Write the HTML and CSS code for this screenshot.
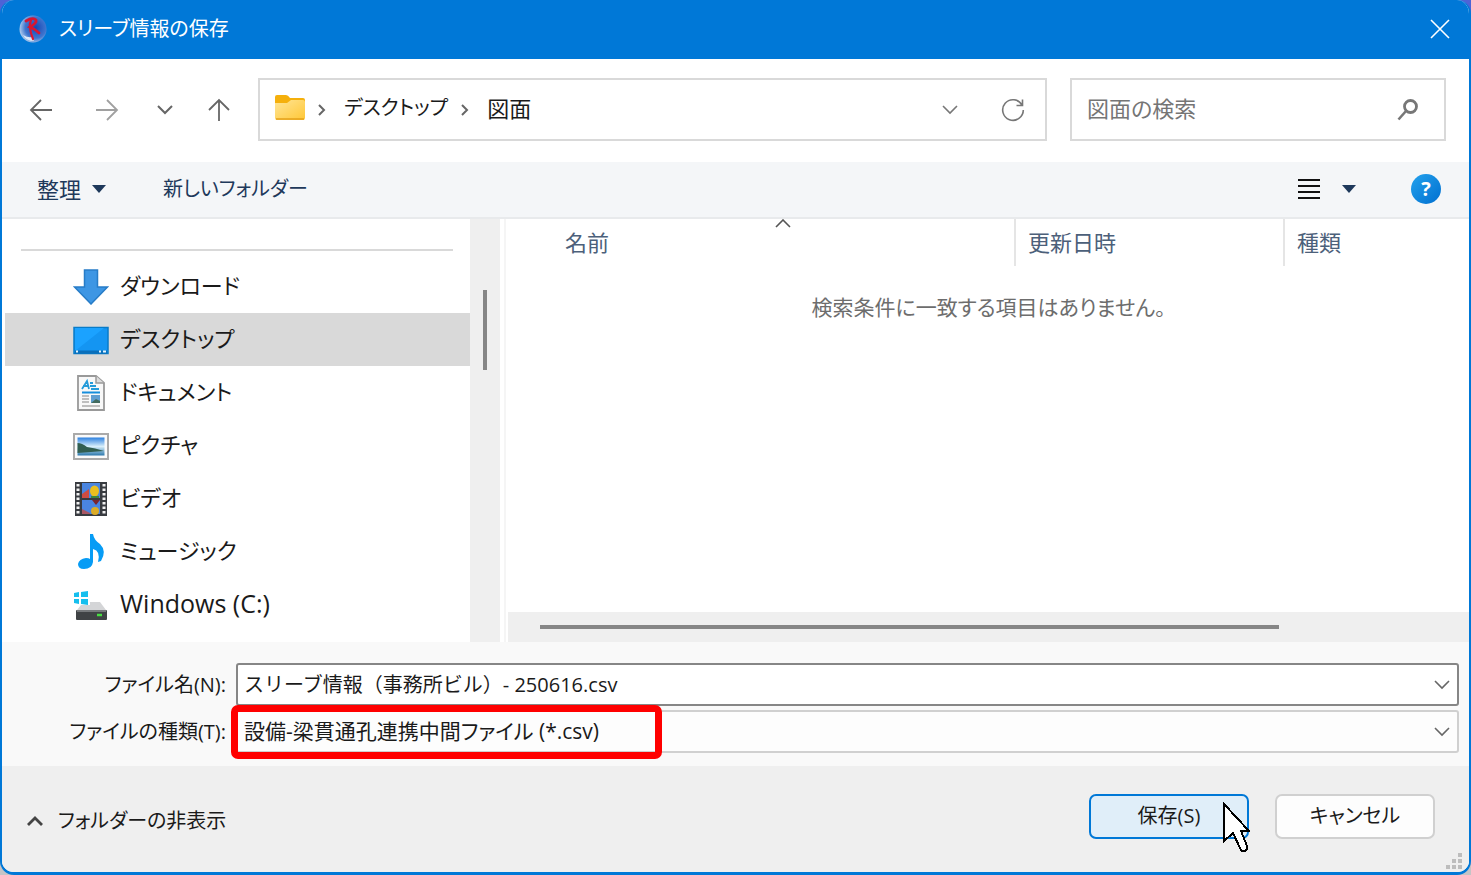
FILE: index.html
```html
<!DOCTYPE html>
<html lang="ja">
<head>
<meta charset="utf-8">
<meta name="viewport" content="width=device-width, initial-scale=1">
<title>スリーブ情報の保存</title>
<link rel="stylesheet" href="styles.css">
</head>
<body>
<div class="dialog" role="dialog" aria-labelledby="dialog-title">
  <header class="titlebar">
    <svg class="app-icon" width="28" height="28" viewBox="0 0 28 28" aria-hidden="true">
      <defs><radialGradient id="globe" cx=".6" cy=".45" r=".65"><stop offset="0" stop-color="#1647b4"/><stop offset=".6" stop-color="#3f76cf"/><stop offset="1" stop-color="#c4dbf2"/></radialGradient></defs>
      <circle cx="14" cy="14" r="13.500" fill="url(#globe)"/>
      <path d="M4 20Q9 23 13 22L15 26Q7 26 4 20Z" fill="#dce9f7"/>
      <path d="M7 6Q14 2 17 5Q18 8 11 12Q16 14 20 18" fill="none" stroke="#d71632" stroke-width="2.800" stroke-linecap="round"/>
      <path d="M12 5Q9 12 14 24" fill="none" stroke="#d71632" stroke-width="2.200" stroke-linecap="round"/>
    </svg>
    <h1 class="title" id="dialog-title">スリーブ情報の保存</h1>
    <button class="icon-button close" type="button" aria-label="閉じる">
      <svg width="20" height="20" viewBox="0 0 20 20"><path d="M1 1L19 19M19 1L1 19" fill="none" stroke="#fff" stroke-width="1.600"/></svg>
    </button>
  </header>

  <nav class="navbar" aria-label="ナビゲーション">
    <div class="nav-buttons">
      <button class="icon-button" type="button" aria-label="戻る"><svg width="24" height="24" viewBox="0 0 24 24"><path d="M23 12H2M12 2L2 12L12 22" fill="none" stroke="#666" stroke-width="1.800"/></svg></button>
      <button class="icon-button" type="button" aria-label="進む"><svg width="24" height="24" viewBox="0 0 24 24"><path d="M1 12H22M12 2L22 12L12 22" fill="none" stroke="#a0a0a0" stroke-width="1.800"/></svg></button>
      <button class="icon-button" type="button" aria-label="最近表示した場所"><svg width="16" height="10" viewBox="0 0 16 10"><path d="M1 1L8 8L15 1" fill="none" stroke="#666" stroke-width="2"/></svg></button>
      <button class="icon-button" type="button" aria-label="上へ"><svg width="24" height="24" viewBox="0 0 24 24"><path d="M12 23V2M2 12L12 2L22 12" fill="none" stroke="#666" stroke-width="1.800"/></svg></button>
    </div>
    <div class="address">
      <svg class="folder" width="30" height="26" viewBox="0 0 30 26" aria-hidden="true">
        <defs><linearGradient id="fold" x1="0" y1="0" x2="1" y2="1"><stop offset="0" stop-color="#ffe596"/><stop offset="1" stop-color="#ffc736"/></linearGradient></defs>
        <path d="M0 2Q0 0 2 0H11Q13 0 15 3H28Q30 3 30 5V12H0Z" fill="#f5b00c"/>
        <path d="M0 8H12L16 5H28Q30 5 30 7V23Q30 25 28 25H2Q0 25 0 23Z" fill="url(#fold)"/>
        <path d="M1 24H29" stroke="#e4a11a" stroke-width="1.500"/>
      </svg>
      <svg class="crumb-arrow" width="8" height="12" viewBox="0 0 8 12" aria-hidden="true"><path d="M1 1L6 6L1 11" fill="none" stroke="#666" stroke-width="2"/></svg>
      <a class="crumb" href="#desktop">デスクトップ</a>
      <svg class="crumb-arrow" width="8" height="12" viewBox="0 0 8 12" aria-hidden="true"><path d="M1 1L6 6L1 11" fill="none" stroke="#666" stroke-width="2"/></svg>
      <a class="crumb" href="#drawings">図面</a>
      <button class="icon-button history" type="button" aria-label="以前の場所"><svg width="16" height="10" viewBox="0 0 16 10"><path d="M1 1L8 8L15 1" fill="none" stroke="#777" stroke-width="1.600"/></svg></button>
      <button class="icon-button" type="button" aria-label="最新の情報に更新"><svg width="24" height="24" viewBox="0 0 24 24"><path d="M21 7A10.300 10.300 0 1 0 22.300 12M21.500 1.500V7.500H15.500" fill="none" stroke="#777" stroke-width="1.600"/></svg></button>
    </div>
    <div class="search">
      <input class="search-input" type="text" placeholder="図面の検索" aria-label="図面の検索">
      <button class="icon-button" type="button" aria-label="検索"><svg width="22" height="24" viewBox="0 0 22 24"><circle cx="13.500" cy="8.500" r="6" fill="none" stroke="#777" stroke-width="2.800"/><path d="M9 13L1.500 21.500" stroke="#777" stroke-width="2.600"/></svg></button>
    </div>
  </nav>

  <div class="toolbar">
    <button class="tool organize" type="button">整理<svg width="14" height="8" viewBox="0 0 14 8" aria-hidden="true"><path d="M0 0H14L7 8Z" fill="#1e395b"/></svg></button>
    <button class="tool" type="button">新しいフォルダー</button>
    <div class="tool-end">
      <button class="tool view" type="button" aria-label="表示方法の変更">
        <svg width="24" height="20" viewBox="0 0 24 20"><path d="M1 1H23M1 7H23M1 13H23M1 19H23" stroke="#111" stroke-width="2"/></svg>
        <svg width="14" height="8" viewBox="0 0 14 8"><path d="M0 0H14L7 8Z" fill="#1e395b"/></svg>
      </button>
      <button class="help" type="button" aria-label="ヘルプ">?</button>
    </div>
  </div>

  <main class="content">
    <aside class="sidebar">
      <ul class="places">
        <li><a class="place" href="#downloads"><svg width="36" height="36" viewBox="0 0 36 36" aria-hidden="true"><path d="M11.500 1H24.500V18H34.500L18 35L1.500 18H11.500Z" fill="#3d96e4" stroke="#277cc7" stroke-width="1.500"/></svg><span class="place-name">ダウンロード</span></a></li>
        <li><a class="place selected" href="#desktop" aria-current="true"><svg width="36" height="36" viewBox="0 0 36 36" aria-hidden="true"><rect x="1" y="5.500" width="34" height="26" fill="#1495f2" stroke="#087bc8" stroke-width="1.500"/><path d="M2 29V6H31Z" fill="#1ba2ff"/><path d="M2 30H34" stroke="#0b6fba" stroke-width="3"/><path d="M3 29.500H5M26 29.500H28M30 29.500H33" stroke="#e4f5ff" stroke-width="2"/></svg><span class="place-name">デスクトップ</span></a></li>
        <li><a class="place" href="#documents"><svg width="36" height="36" viewBox="0 0 36 36" aria-hidden="true"><path d="M5 1H23L31 8V35H5Z" fill="#f8f8f8" stroke="#999" stroke-width="1.800"/><path d="M23 1V8H31" fill="#ddd" stroke="#999" stroke-width="1.500"/><path d="M9 14L14 6L16 14M10 11H16M17 8H20M17 11H23M18 14H26" fill="none" stroke="#259bd9" stroke-width="1.800"/><path d="M9 17.500H27" stroke="#168edc" stroke-width="2"/><path d="M9 21H16M9 24H16M9 27H16M9 31H27" stroke="#aaa" stroke-width="1.500"/><rect x="18" y="20" width="9" height="8" fill="#5f9ed1"/><path d="M18 28L23 24L27 26V28Z" fill="#426b5f"/></svg><span class="place-name">ドキュメント</span></a></li>
        <li><a class="place" href="#pictures"><svg width="36" height="36" viewBox="0 0 36 36" aria-hidden="true"><defs><linearGradient id="sky" x1="0" y1="0" x2="0" y2="1"><stop offset="0" stop-color="#2d80df"/><stop offset=".5" stop-color="#d8effb"/><stop offset="1" stop-color="#2a77ac"/></linearGradient></defs><rect x="1" y="6" width="34" height="25" fill="#fafafa" stroke="#aaa" stroke-width="2"/><rect x="4.500" y="9.500" width="27" height="18" fill="url(#sky)"/><path d="M4.500 15Q9 15 14 19Q22 20 31 23L4.500 25Z" fill="#315e50"/></svg><span class="place-name">ピクチャ</span></a></li>
        <li><a class="place" href="#videos"><svg width="36" height="36" viewBox="0 0 36 36" aria-hidden="true"><rect x="2" y="1" width="32" height="34" fill="#383b40"/><rect x="9" y="2" width="18" height="15" fill="#4a85e0"/><rect x="9" y="19" width="18" height="14" fill="#4a85e0"/><path d="M9 13L16 8V17H9Z" fill="#cf4c42"/><ellipse cx="21.500" cy="10" rx="4.500" ry="5.500" fill="#e9bf1f"/><path d="M18 15H26V17H18Z" fill="#3e863d"/><path d="M19 19H27L23 24Z" fill="#7b252d"/><circle cx="22" cy="30" r="4" fill="#dcac28"/><path d="M9 28L17 32V33H9Z" fill="#a95764"/><path d="M5 3V34M31 3V34" stroke="#f1f1f1" stroke-width="3" stroke-dasharray="2.500 2"/></svg><span class="place-name">ビデオ</span></a></li>
        <li><a class="place" href="#music"><svg width="36" height="36" viewBox="0 0 36 36" aria-hidden="true"><path d="M17 0H20Q21 6 27 10Q34 17 28 27L25 28Q28 17 20 15V28Q19 35 11 35Q5 35 5 30Q6 25 13 24Q16 24 17 25Z" fill="#079cf5"/></svg><span class="place-name">ミュージック</span></a></li>
        <li><a class="place" href="#drive-c"><svg width="36" height="36" viewBox="0 0 36 36" aria-hidden="true"><path d="M1 6L6 5V10H1ZM8 5L15 4V10H8ZM1 12H6V17L1 16ZM8 12H15V18L8 17Z" fill="#16bfee"/><path d="M17 15H27L33 23H4L8 18H17Z" fill="#d4d5d7"/><rect x="3" y="23" width="31" height="10" rx="1" fill="#404345"/><path d="M4 24H33" stroke="#898b8e" stroke-width="1.500"/><path d="M24 28H29" stroke="#48df42" stroke-width="2.500"/></svg><span class="place-name drive-name">Windows (C:)</span></a></li>
      </ul>
      <div class="scroll-y"><div class="thumb-y"></div></div>
    </aside>
    <section class="files">
      <table class="file-table">
        <thead>
          <tr>
            <th class="col-name" scope="col">名前<svg class="sort" width="16" height="9" viewBox="0 0 16 9" aria-hidden="true"><path d="M1 8L8 1L15 8" fill="none" stroke="#555" stroke-width="1.600"/></svg></th>
            <th class="col-date" scope="col">更新日時</th>
            <th scope="col">種類</th>
          </tr>
        </thead>
        <tbody><tr><td class="empty" colspan="3">検索条件に一致する項目はありません。</td></tr></tbody>
      </table>
      <div class="scroll-x"><div class="thumb-x"></div></div>
    </section>
  </main>

  <form class="fields">
    <label class="field-label" for="file-name">ファイル名(N):</label>
    <div class="combo combo-name">
      <input class="field" id="file-name" type="text" value="スリーブ情報（事務所ビル）- 250616.csv">
      <svg class="chevron" width="16" height="10" viewBox="0 0 16 10" aria-hidden="true"><path d="M1 1L8 8L15 1" fill="none" stroke="#666" stroke-width="1.600"/></svg>
    </div>
    <label class="field-label" for="file-type">ファイルの種類(T):</label>
    <div class="combo combo-type">
      <select class="field" id="file-type"><option>設備-梁貫通孔連携中間ファイル (*.csv)</option></select>
      <svg class="chevron" width="16" height="10" viewBox="0 0 16 10" aria-hidden="true"><path d="M1 1L8 8L15 1" fill="none" stroke="#666" stroke-width="1.600"/></svg>
      <div class="callout"></div>
    </div>
  </form>

  <footer class="footer">
    <button class="toggle" type="button"><svg width="18" height="12" viewBox="0 0 18 12" aria-hidden="true"><path d="M2 10L9 3L16 10" fill="none" stroke="#444" stroke-width="2.800"/></svg>フォルダーの非表示</button>
    <div class="actions">
      <button class="action primary" type="button">保存(S)
        <svg class="pointer" width="28" height="50" viewBox="0 0 28 50" shape-rendering="crispEdges" aria-hidden="true"><path d="M2 2V39L11 31L18 46Q19 49 21 49Q26 49 25 44L19 29H27Z" fill="#fff" stroke="#000" stroke-width="2"/></svg>
      </button>
      <button class="action" type="button">キャンセル</button>
    </div>
    <svg class="grip" width="17" height="17" viewBox="0 0 17 17" aria-hidden="true"><path d="M12 1h4v4h-4zM6 7h4v4h-4zM12 7h4v4h-4zM0 13h4v4h-4zM6 13h4v4h-4zM12 13h4v4h-4z" fill="#bdbdbd"/></svg>
  </footer>
</div>
</body>
</html>
```
FILE: styles.css
```css
* { box-sizing: border-box; }

html { background: linear-gradient(#4d63d6 50%, #c4c4c6 50%); }

body {
  margin: 0;
  font-family: "Open Sans", "Noto Sans CJK JP", sans-serif;
  font-size: 22px;
  line-height: 32px;
  font-feature-settings: "palt";
  color: #1a1a1a;
}

button, input, select { font: inherit; font-feature-settings: inherit; color: inherit; }

button { padding: 0; border: 0; background: none; }

svg { display: block; flex: none; }

a { color: inherit; text-decoration: none; }

.dialog {
  display: flex;
  flex-direction: column;
  min-height: 100vh;
  overflow: hidden;
  border: 2px solid #0078d7;
  border-top: 0;
  border-bottom-width: 3px;
  border-radius: 14px;
  background: #fff;
}

.titlebar {
  display: flex;
  align-items: center;
  height: 59px;
  padding: 0 19px 2px 17px;
  background: #0078d7;
  color: #fff;
}

.title {
  flex: 1;
  margin: 0 0 0 12px;
  font-size: 20px;
  font-weight: 400;
}

.icon-button { display: grid; place-items: center; }

.navbar {
  display: flex;
  align-items: center;
  padding: 19px 23px 21px 27px;
}

.nav-buttons {
  display: flex;
  align-items: center;
  gap: 38px;
  width: 229px;
}

.nav-buttons .icon-button:nth-child(2) { margin-left: 4px; }
.nav-buttons .icon-button:last-child { margin-left: -4px; }

.address, .search {
  display: flex;
  align-items: center;
  height: 63px;
  border: 2px solid #d9d9d9;
}

.address { flex: 1; padding: 0 20px 0 15px; }

.folder { margin-bottom: 4px; }

.crumb { padding-bottom: 4px; font-size: 20px; }

.crumb:nth-of-type(2) { font-size: 22px; }

.crumb-arrow { margin: 0 18px 0 13px; }

.history { margin: 0 43px 0 auto; }

.search { width: 376px; margin-left: 23px; padding: 0 25px 0 15px; }

.search-input {
  flex: 1;
  min-width: 0;
  padding: 0 0 4px;
  border: 0;
  background: none;
  outline: 0;
}

.search-input::placeholder { color: #757575; opacity: 1; }

.toolbar {
  display: flex;
  align-items: center;
  gap: 57px;
  height: 57px;
  padding: 0 28px 2px 35px;
  border-bottom: 2px solid #e8eaec;
  background: #f4f6f8;
  color: #1e395b;
  font-size: 20px;
}

.tool { display: flex; align-items: center; gap: 11px; }

.organize { font-size: 22px; }

.tool-end {
  display: flex;
  align-items: center;
  gap: 55px;
  margin-left: auto;
}

.view { gap: 21px; }

.help {
  width: 30px;
  height: 30px;
  border-radius: 50%;
  background: linear-gradient(135deg, #24a2ed, #006fd0);
  color: #fff;
  font-size: 20px;
  font-weight: 700;
  line-height: 30px;
}

.content { display: flex; flex: 1; }

.sidebar {
  display: flex;
  width: 504px;
  padding-left: 3px;
  border-right: 2px solid #f5f5f5;
}

.places {
  flex: 1;
  margin: 0;
  padding: 0 0 11px;
  list-style: none;
}

.places::before {
  content: "";
  display: block;
  height: 2px;
  margin: 30px 17px 9px 16px;
  background: #d9d9d9;
}

.place {
  display: flex;
  align-items: center;
  gap: 11px;
  height: 53px;
  padding-left: 68px;
}

.place-name { padding-bottom: 4px; }

.drive-name { font-size: 25px; }

.selected { background: #d9d9d9; }

.scroll-y {
  width: 30px;
  margin-right: 4px;
  padding: 71px 12px 0 13px;
  background: #efefef;
}

.thumb-y { width: 4px; height: 80px; background: #868686; }

.files {
  display: flex;
  flex: 1;
  flex-direction: column;
  justify-content: space-between;
  padding-left: 2px;
}

.file-table {
  width: 100%;
  border-collapse: collapse;
  table-layout: fixed;
}

.file-table th {
  height: 47px;
  padding: 0 0 2px 12px;
  border-left: 2px solid #e5e5e5;
  color: #4c607a;
  font-weight: 400;
  text-align: left;
}

.file-table .col-name {
  position: relative;
  width: 507px;
  padding-left: 57px;
  border-left: 0;
}

.file-table .col-date { width: 269px; }

.sort {
  position: absolute;
  top: 0;
  right: 223px;
}

.empty {
  height: 84px;
  padding: 0 0 2px;
  color: #6d6d6d;
  font-size: 21px;
  text-align: center;
}

.scroll-x { padding: 13px 190px 13px 32px; background: #efefef; }

.thumb-x { height: 4px; background: #868686; }

.fields {
  display: grid;
  grid-template-columns: 224px 1fr;
  gap: 4px 10px;
  padding: 21px 10px 13px 0;
  background: #f9f9f9;
  font-size: 20px;
}

.field-label { align-self: center; text-align: right; }

.combo {
  position: relative;
  height: 43px;
  border: 2px solid #868686;
  border-radius: 3px;
  background: #fff;
}

.combo-name { font-feature-settings: normal; }

.combo-type { border-color: #d0d0d0; background: #fdfdfd; font-size: 21px; }

.field {
  display: block;
  width: 100%;
  height: 100%;
  padding: 0 40px 2px 6px;
  border: 0;
  outline: 0;
  background: none;
  appearance: none;
}

.chevron {
  position: absolute;
  top: 15px;
  right: 7px;
  pointer-events: none;
}

.callout {
  position: absolute;
  top: -7px;
  left: -7px;
  width: 431px;
  height: 54px;
  border: 7px solid #f00;
  border-radius: 7px;
  pointer-events: none;
}

.footer {
  position: relative;
  display: flex;
  align-items: center;
  justify-content: space-between;
  padding: 28px 34px 33px 24px;
  background: #efefef;
  font-size: 20px;
}

.toggle { display: flex; align-items: center; gap: 14px; padding-top: 8px; }

.actions { display: flex; gap: 26px; }

.action {
  position: relative;
  width: 160px;
  height: 45px;
  padding-bottom: 2px;
  border: 2px solid #d0d0d0;
  border-radius: 7px;
  background: #fdfdfd;
}

.primary { border-color: #0078d7; background: #e0eef9; }

.pointer { position: absolute; top: 6px; right: -3px; }

.grip { position: absolute; right: 6px; bottom: 3px; }
```
